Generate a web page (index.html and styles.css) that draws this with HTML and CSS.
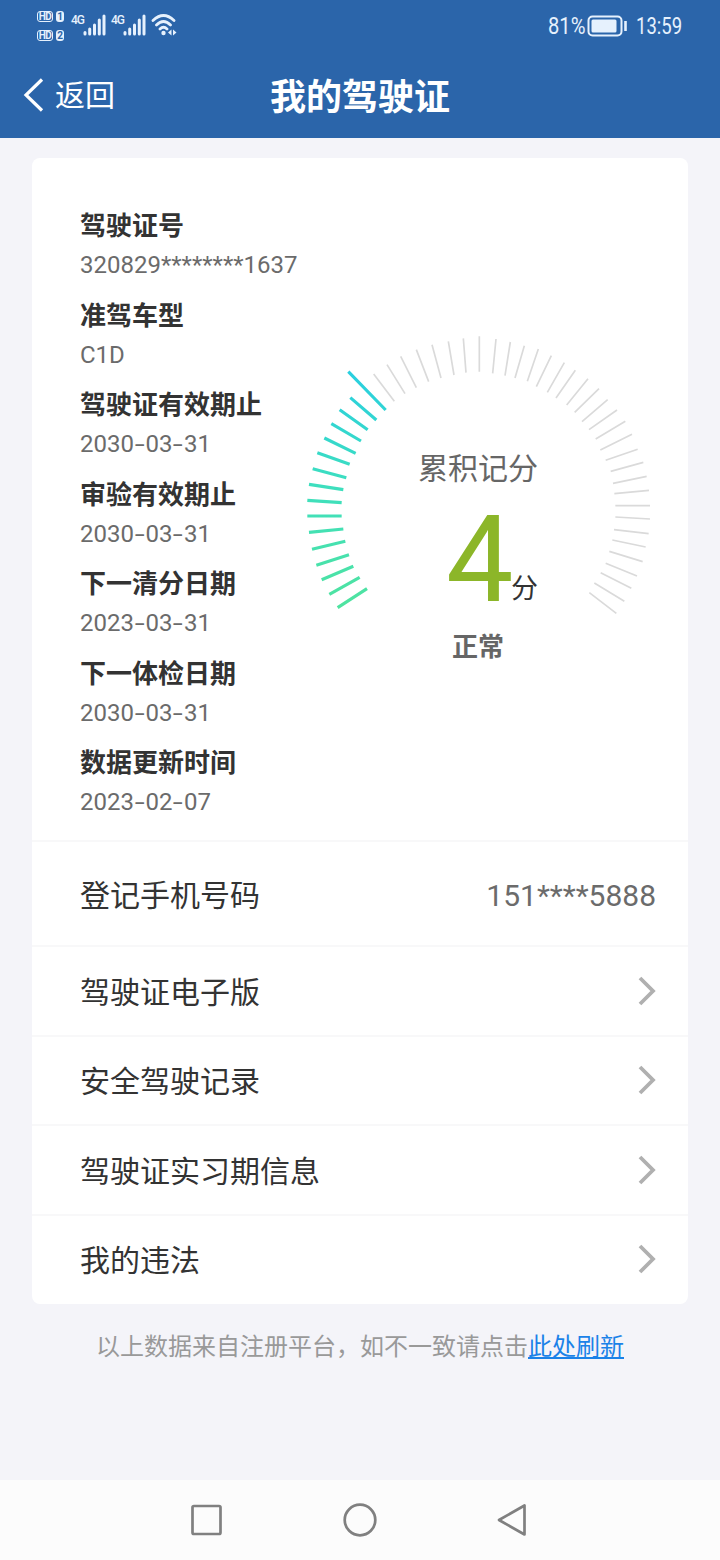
FILE: index.html
```html
<!DOCTYPE html>
<html lang="zh-CN">
<head>
<meta charset="utf-8">
<title>我的驾驶证</title>
<link rel="stylesheet" href="styles.css">
</head>
<body>
<div class="screen">
  <header class="top">
    <div class="status">
      <div class="status-left">
        <div class="sims">
          <span class="sim"><b class="hd">HD</b><b class="slot">1</b></span>
          <span class="sim"><b class="hd">HD</b><b class="slot">2</b></span>
        </div>
        <div class="signal first"><span class="net">4G</span><svg width="23" height="22" viewBox="0 0 23 22"><path d="M2 18.500v1.500M6.700 15v5M11.500 11v9M16.300 6v14M21 2v18" /></svg></div>
        <div class="signal"><span class="net">4G</span><svg width="23" height="22" viewBox="0 0 23 22"><path d="M2 18.500v1.500M6.700 15v5M11.500 11v9M16.300 6v14M21 2v18" /></svg></div>
        <svg class="wifi" width="26" height="24" viewBox="0 0 26 24"><g fill="none" stroke="#e6f1fd" stroke-width="2.800" stroke-linecap="round"><path d="M2 7.500Q12.500-2.500 23 7.500M5.500 12Q12.500 5 19.500 12M9 16Q12.500 12.500 16 16"/></g><circle cx="12.500" cy="20" r="2.200" fill="#e6f1fd"/><path d="M20.500 16.500v6l-3.500-3zM22 16.500v6l3.500-3z" fill="#e6f1fd"/></svg>
      </div>
      <div class="status-right">
        <span class="pct">81%</span>
        <svg width="42" height="22" viewBox="0 0 42 22"><rect x="2.500" y="1.500" width="33" height="19" rx="4" fill="none" stroke="#e6f1fd" stroke-width="2"/><rect x="5.500" y="4.500" width="25" height="13" rx="1.500" fill="#e6f1fd"/><path d="M39.500 6v10" stroke="#e6f1fd" stroke-width="2.600"/></svg>
        <span class="clock">13:59</span>
      </div>
    </div>
    <div class="bar">
      <div class="back"><svg width="22" height="36" viewBox="0 0 22 36"><path d="M20 2.500L4 18l16 15.500" fill="none" stroke="#fff" stroke-width="3.200"/></svg><span>返回</span></div>
      <h1>我的驾驶证</h1>
    </div>
  </header>

  <main class="card">
    <section class="summary">
      <dl class="facts">
        <div><dt>驾驶证号</dt><dd>320829********1637</dd></div>
        <div><dt>准驾车型</dt><dd>C1D</dd></div>
        <div><dt>驾驶证有效期止</dt><dd>2030<i>-</i>03<i>-</i>31</dd></div>
        <div><dt>审验有效期止</dt><dd>2030<i>-</i>03<i>-</i>31</dd></div>
        <div><dt>下一清分日期</dt><dd>2023<i>-</i>03<i>-</i>31</dd></div>
        <div><dt>下一体检日期</dt><dd>2030<i>-</i>03<i>-</i>31</dd></div>
        <div><dt>数据更新时间</dt><dd>2023<i>-</i>02<i>-</i>07</dd></div>
      </dl>
      <div class="gauge">
        <svg class="dial" width="375" height="310" viewBox="0 0 1125 930">
          <defs><linearGradient id="teal" gradientUnits="userSpaceOnUse" x1="0" y1="155" x2="0" y2="863"><stop offset="0" stop-color="#29cfe0"/><stop offset=".5" stop-color="#3edfbd"/><stop offset="1" stop-color="#4fe3a0"/></linearGradient></defs>
          <path fill="none" stroke="url(#teal)" stroke-width="9.500" d="M160 155L272 270M166 233L244 300M134 269L218 329M109 311L198 363M88 354L182 400M67 398L164 433M53 446L154 473M42 493L145 509M37 541L140 548M37 588L140 588.100M42 637L145 627M51 688L151 664M64 736L162 704M80 779L175 739M103 823L194 772M128 863L216 806"/>
          <path fill="none" stroke="#dadada" stroke-width="5" d="M236 162L298 244M276 134L330 221M317 109L364 203M364 89L401 185M411 74L438 174M460 64L477 165M505 55L513 158M553 49V155"/>
          <path transform="translate(525)" fill="none" stroke="#dadada" stroke-width="5" d="M78 57L68 160M121 66L105 167M163 77L135 174M205 87L172 184M244 107L199 200M283 128L232 217M316 151L258 234M354 176L290 255M387 206L314 277M413 239L336 305M441 270L357 329M466 304L377 357M486 343L391 390M503 388L407 421M520 427L422 454M530 469L429 490M537 511L433 521M540 557H436M540 597L436 591M536 641L432 629M527 681L427 660M518 725L418 694M501 768L407 730M484 805L392 758M463 844L373 789M439 880L358 818"/>
        </svg>
        <div class="score">
          <div class="score-title">累积记分</div>
          <div class="score-value"><span class="num">4</span><span class="unit">分</span></div>
          <div class="score-state">正常</div>
        </div>
      </div>
    </section>
    <div class="row phone"><span>登记手机号码</span><span class="tel">151****5888</span></div>
    <div class="row"><span>驾驶证电子版</span><svg class="chev" viewBox="0 0 18 32"><path d="M2 3l13 13L2 29"/></svg></div>
    <div class="row"><span>安全驾驶记录</span><svg class="chev" viewBox="0 0 18 32"><path d="M2 3l13 13L2 29"/></svg></div>
    <div class="row"><span>驾驶证实习期信息</span><svg class="chev" viewBox="0 0 18 32"><path d="M2 3l13 13L2 29"/></svg></div>
    <div class="row"><span>我的违法</span><svg class="chev" viewBox="0 0 18 32"><path d="M2 3l13 13L2 29"/></svg></div>
  </main>
  <p class="note">以上数据来自注册平台，如不一致请点击<a>此处刷新</a></p>
  <nav class="keys">
    <svg width="34" height="34" viewBox="0 0 34 34"><rect x="2.500" y="3" width="28" height="28" rx="1.500"/></svg>
    <svg width="34" height="34" viewBox="0 0 34 34"><circle cx="17" cy="17" r="15.300"/></svg>
    <svg width="34" height="34" viewBox="0 0 34 34"><path d="M28.500 2.500v29L3 17z" stroke-linejoin="round"/></svg>
  </nav>
</div>
</body>
</html>
```
FILE: styles.css
```css
* { box-sizing: border-box; }
body { margin: 0; font-family: Roboto, "Noto Sans CJK SC", sans-serif; color: #333; }
.screen { width: 720px; height: 1560px; background: #f4f4f9; display: flex; flex-direction: column; }
.top { height: 138px; background: #2b65aa; color: #fff; flex: none; }
.status { height: 52px; display: flex; justify-content: space-between; padding: 0 38px 0 37px; color: #e6f1fd; }
.status-left { display: flex; align-items: flex-start; }
.sims { display: flex; flex-direction: column; gap: 8px; padding-top: 11px; width: 28px; }
.sim { display: flex; gap: 3px; height: 11px; }
.sim b { font: 700 10px/11px Roboto, sans-serif; text-align: center; border-radius: 3px; }
.sim .hd { width: 16px; height: 11px; line-height: 9px; border: 1px solid #e6f1fd; letter-spacing: -0.5px; }
.sim .slot { width: 8px; background: #e6f1fd; color: #2b65aa; }
.signal { display: flex; width: 40px; padding-top: 14px; }
.signal.first { margin-left: 6px; }
.signal svg { flex: none; margin-left: -1px; }
.signal path { stroke: #e6f1fd; stroke-width: 3; stroke-linecap: round; }
.net { font: 500 12px/12px Roboto, sans-serif; width: 13px; letter-spacing: -1px; white-space: nowrap; }
.wifi { margin: 13px 0 0 0; }
.status-right { display: flex; align-items: center; }
.pct, .clock { font-size: 24px; line-height: 28px; white-space: nowrap; transform-origin: left; }
.pct { width: 38px; transform: scaleX(.84); }
.clock { width: 46px; margin-left: 8px; transform: scaleX(.77); }
.bar { height: 86px; display: grid; grid-template-columns: 200px 320px 200px; align-items: center; }
.back { display: flex; align-items: center; padding-left: 22px; font-size: 30px; line-height: 44px; gap: 11px; }
.back span { padding-top: 2px; }
h1 { margin: 0; padding-top: 6px; font-size: 36px; line-height: 48px; text-align: center; font-weight: 700; }
.card { width: 656px; height: 1146px; margin: 20px 32px 0; background: #fff; border-radius: 8px; flex: none; }
.summary { height: 682px; padding: 47px 18px 0 48px; display: grid; grid-template-columns: 215px 375px; }
.facts { margin: 0; }
.facts div { height: 89.500px; }
dt { padding-top: 1px; font-size: 26px; line-height: 40px; height: 40px; font-weight: 700; white-space: nowrap; }
dd { margin: 0; font-size: 24px; line-height: 40px; color: #6b6b6b; white-space: nowrap; }
dd i { display: inline-block; width: 11.500px; text-align: center; font-style: normal; transform: scaleX(1.500); }
.gauge { display: grid; padding-top: 115px; align-items: start; height: 460px; }
.dial, .score { grid-area: 1 / 1; }
.score { display: flex; flex-direction: column; width: 366px; text-align: center; padding-top: 127px; }
.score-title { font-size: 30px; line-height: 44px; color: #666; }
.score-value { display: flex; justify-content: center; align-items: baseline; height: 136px; padding: 3px 0 0 28px; }
.num { font-size: 120px; line-height: 132px; color: #8cb629; width: 65px; }
.unit { font-size: 27px; line-height: 40px; position: relative; top: -3px; }
.score-state { font-size: 26px; line-height: 40px; font-weight: 700; color: #666; }
.row { height: 89.500px; padding: 0 32px 0 48px; display: flex; justify-content: space-between; align-items: center; font-size: 30px; line-height: 44px; border-top: 2px solid #f8f8f9; }
.row span { padding-top: 4px; }
.phone { height: 105px; }
.tel { color: #6b6b6b; }
.chev { width: 18px; height: 32px; }
.chev path { fill: none; stroke: #b0b0b0; stroke-width: 3.800; }
.note { margin: 25px 0 0; text-align: center; font-size: 24px; line-height: 36px; color: #999; }
.note a { color: #1b82e8; text-decoration: underline; }
.keys { height: 80px; margin-top: auto; background: #fcfcfc; display: flex; justify-content: center; align-items: center; gap: 119px; }
.keys svg { fill: none; stroke: #808080; stroke-width: 2.700; }
```
